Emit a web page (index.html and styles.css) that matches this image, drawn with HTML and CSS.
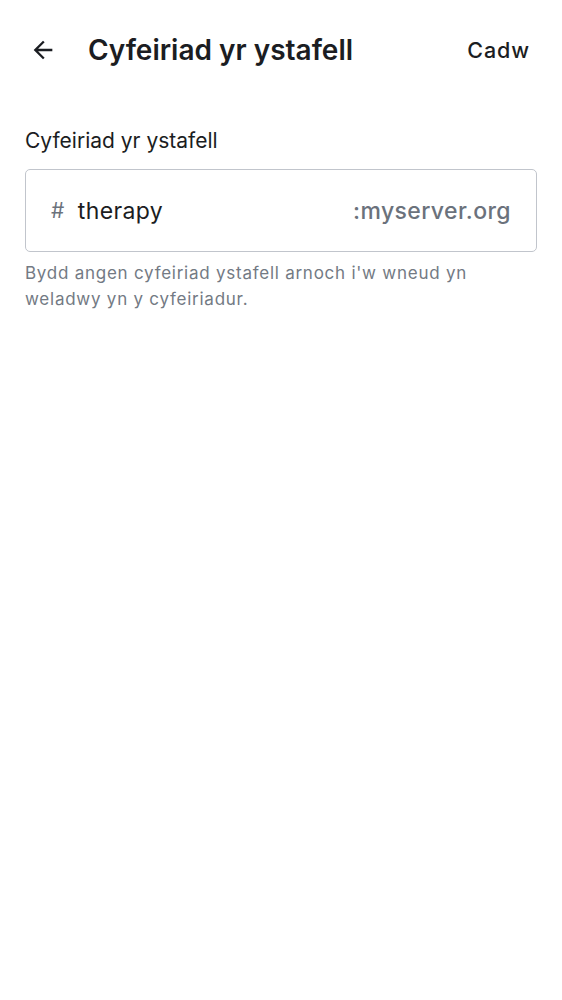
FILE: index.html
```html
<!DOCTYPE html>
<html>
<head>
<meta charset="utf-8">
<link rel="stylesheet" href="styles.css">
</head>
<body>
<header class="topbar">
  <button class="back" aria-label="Back">
    <svg width="28" height="28" viewBox="0 0 24 24"><path d="M20 11H7.83l5.59-5.59L12 4l-8 8 8 8 1.41-1.41L7.83 13H20v-2z" fill="#1b1d22"/></svg>
  </button>
  <h1 class="title">Cyfeiriad yr ystafell</h1>
  <span class="save">Cadw</span>
</header>
<main class="content">
  <label class="label">Cyfeiriad yr ystafell</label>
  <div class="field">
    <span class="hash">#</span>
    <span class="value">therapy</span>
    <span class="domain">:myserver.org</span>
  </div>
  <p class="help">Bydd angen cyfeiriad ystafell arnoch i'w wneud yn weladwy yn y cyfeiriadur.</p>
</main>
</body>
</html>
```

FILE: styles.css
```css
* { box-sizing: border-box; }
body {
  margin: 0;
  background: #ffffff;
  font-family: Inter, "Noto Sans", sans-serif;
  color: #1b1d22;
}
.topbar {
  display: flex;
  align-items: center;
  height: 100px;
  padding: 0 32px 0 28px;
}
.back {
  border: 0;
  background: none;
  padding: 0;
  width: 30px;
  height: 30px;
  display: flex;
  align-items: center;
  justify-content: center;
  margin-right: 30px;
}
.title {
  flex: 1;
  margin: 0;
  font-size: 28px;
  font-weight: 600;
}
.save {
  font-size: 21.5px;
  font-weight: 500;
  letter-spacing: 0.9px;
}
.content {
  padding: 25px 25px 0 25px;
}
.label {
  display: block;
  font-size: 21px;
  line-height: 32px;
  margin-bottom: 12px;
}
.field {
  display: flex;
  align-items: center;
  height: 83px;
  border: 1px solid #c1c5cc;
  border-radius: 5px;
  padding: 0 25px 0 25px;
  font-size: 23px;
  letter-spacing: 0.4px;
}
.hash {
  color: #6b727c;
  font-size: 21px;
  margin-right: 13px;
}
.value {
  flex: 1;
  color: #1b1d22;
}
.domain {
  color: #6b727c;
  font-weight: 500;
}
.help {
  margin: 8px 0 0 0;
  font-size: 17px;
  line-height: 26px;
  letter-spacing: 0.75px;
  color: #737a84;
  max-width: 480px;
}
```
